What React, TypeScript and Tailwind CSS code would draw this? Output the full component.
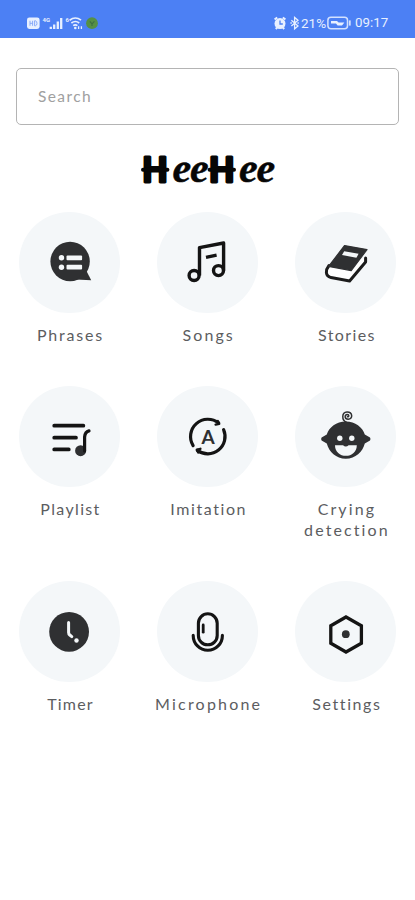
import type { ReactNode } from 'react'

const INK = '#2f3032'
const PAPER = '#f4f7f9'

const PhrasesIcon = () => (
  <>
    <circle cx="51.1" cy="49.5" r="19.7" fill={INK} />
    <path d="M57 67.4 L72.2 68.2 L67 58 Z" fill={INK} />
    <circle cx="42.5" cy="45.8" r="2.7" fill={PAPER} />
    <circle cx="42.5" cy="55.2" r="2.7" fill={PAPER} />
    <rect x="47.5" y="43.6" width="15.6" height="4.6" rx="1" fill={PAPER} />
    <rect x="47.5" y="52.8" width="15.6" height="4.6" rx="1" fill={PAPER} />
  </>
)

const SongsIcon = () => (
  <g fill="none" stroke="#141414" strokeWidth="3.4" strokeLinejoin="round">
    <circle cx="37.1" cy="63.5" r="5" />
    <circle cx="61.5" cy="58.6" r="5" />
    <path d="M42.5 63.5 V35.6 L66.6 31 V58.6" />
    <path d="M49 45.3 L59.6 43.1" />
  </g>
)

const StoriesIcon = () => (
  <>
    <path d="M34 53.5 C30.4 58 30 64 36 65.6 L54.6 69 L70.6 50 V46" fill="#fff" stroke="#1c1c1c" strokeWidth="3" strokeLinejoin="round" strokeLinecap="round" />
    <path d="M49.5 33.6 L72 37.6 L56.2 58.6 L33.6 54.4 Z" fill={INK} stroke={INK} strokeWidth="1.2" strokeLinejoin="round" />
    <path d="M49.2 39.2 L63.6 41.8 L61.4 45.8 L47 43 Z" fill={PAPER} />
  </>
)

const PlaylistIcon = () => (
  <>
    <path d="M35.2 39.7 H64.4 M35.2 51.7 H57 M35.2 63.4 H49.8" stroke="#141414" strokeWidth="3.7" strokeLinecap="round" />
    <circle cx="61.6" cy="64.7" r="5.5" fill={INK} />
    <path d="M65.6 65 V51 Q66 46 70 44.9" fill="none" stroke="#141414" strokeWidth="3.2" strokeLinecap="round" />
  </>
)

const ImitationIcon = () => (
  <>
    <g fill="none" stroke="#141414" strokeWidth="3.2" strokeLinecap="round" strokeLinejoin="round">
      <path d="M36.1 59.6 A17.3 17.3 0 0 1 61.6 37" />
      <path d="M66.6 43.6 A17.3 17.3 0 0 1 40.4 64.4" />
      <path d="M58.6 38.6 L62.2 37.8 L60.8 35" strokeWidth="2.4" />
      <path d="M43.4 62.8 L39.8 63.6 L41.2 66.4" strokeWidth="2.4" />
    </g>
    <text x="51" y="57.8" textAnchor="middle" fontFamily="Lato, sans-serif" fontWeight="700" fontSize="19" fill={INK}>A</text>
  </>
)

const BabyIcon = () => (
  <>
    <path d="M50.8 35.4 C60.4 35.4 67.4 41 69.8 48.4 L75 51.4 Q76 53 75 54.6 L69.8 57.6 C67.6 66 60.6 72.8 50.8 72.8 C41 72.8 34 66 31.8 57.6 L26.6 54.6 Q25.6 53 26.6 51.4 L31.8 48.4 C34.2 41 41.2 35.4 50.8 35.4 Z" fill={INK} />
    <circle cx="44.8" cy="52.3" r="2.7" fill={PAPER} />
    <circle cx="56.8" cy="52.3" r="2.7" fill={PAPER} />
    <path d="M40 59.2 H48 Q50.8 61.6 53.6 59.2 H61.8 C61.8 66 56.8 69.8 50.9 69.8 C45 69.8 40 66 40 59.2 Z" fill={PAPER} />
    <path d="M51.3 36.2 C46.6 34 46.4 26.4 52 26 C57.6 25.8 58.4 33 53.2 33.2 C49.2 33.2 49.4 28.6 52.2 28.6 C54.4 28.8 54.2 31 52.4 30.8" fill="none" stroke={INK} strokeWidth="1.5" strokeLinecap="round" />
  </>
)

const TimerIcon = () => (
  <>
    <circle cx="50.1" cy="50.8" r="19.9" fill={INK} />
    <path d="M49.6 41.4 V51.4 Q49.6 53 50.8 54 L52.8 55.6" fill="none" stroke={PAPER} strokeWidth="3" strokeLinecap="round" />
    <circle cx="57.5" cy="59.5" r="2.2" fill={PAPER} />
  </>
)

const MicrophoneIcon = () => (
  <g fill="none" stroke="#141414" strokeWidth="3.1" strokeLinecap="round">
    <rect x="41.4" y="32.8" width="18.8" height="31" rx="9.4" />
    <path d="M46.2 44 V51.2" strokeWidth="2.8" />
    <path d="M36.2 54.4 A14.6 14.9 0 0 0 65.4 54.4" />
  </g>
)

const SettingsIcon = () => (
  <>
    <path d="M51 36 L66.4 44.8 V62.2 L51 71 L35.8 62.2 V44.8 Z" fill="none" stroke="#141414" strokeWidth="3.3" />
    <circle cx="50.8" cy="53.2" r="3.9" fill={INK} />
  </>
)

type MenuItem = { label: string; icon: ReactNode; spacing: string }

const rows: { className: string; items: MenuItem[] }[] = [
  {
    className: 'h-[174px]',
    items: [
      { label: 'Phrases', icon: <PhrasesIcon />, spacing: 'tracking-[1.8px]' },
      { label: 'Songs', icon: <SongsIcon />, spacing: 'tracking-[2.1px]' },
      { label: 'Stories', icon: <StoriesIcon />, spacing: 'tracking-[1.4px]' },
    ],
  },
  {
    className: 'h-[195px]',
    items: [
      { label: 'Playlist', icon: <PlaylistIcon />, spacing: 'tracking-[1.35px]' },
      { label: 'Imitation', icon: <ImitationIcon />, spacing: 'tracking-[1.6px]' },
      { label: 'Crying detection', icon: <BabyIcon />, spacing: 'tracking-[2.1px]' },
    ],
  },
  {
    className: 'h-[195px]',
    items: [
      { label: 'Timer', icon: <TimerIcon />, spacing: 'tracking-[1.2px]' },
      { label: 'Microphone', icon: <MicrophoneIcon />, spacing: 'tracking-[2.2px]' },
      { label: 'Settings', icon: <SettingsIcon />, spacing: 'tracking-[1.6px]' },
    ],
  },
]

function MenuButton({ item }: { item: MenuItem }) {
  return (
    <button className="flex flex-col items-center">
      <span className="block size-[101px] shrink-0 rounded-full bg-[#f4f7f9]">
        <svg viewBox="0 0 101 101" className="size-[101px]">{item.icon}</svg>
      </span>
      <span className={`mt-3 block w-[116px] pl-0.5 text-center text-[16px] leading-[20.5px] text-[#5c5d5f] ${item.spacing}`}>
        {item.label}
      </span>
    </button>
  )
}

function StatusBar() {
  return (
    <header className="flex h-[38px] items-end justify-between bg-[#4c80f4] pr-[27px] pb-[7px] pl-[27px] text-[#e8f0ff]">
      <svg viewBox="0 0 72 16" className="h-4 w-[72px]" fill="none">
        <rect x="0" y="2.4" width="12.6" height="11.6" rx="2.4" fill="#e8f0ff" />
        <path d="M3 5.8 V10.8 M3 8.3 H5.6 M5.6 5.8 V10.8 M7.6 5.8 V10.8 H8.4 Q10 10.4 10 8.3 Q10 6.2 8.4 5.8 Z" stroke="#7da2f7" strokeWidth="0.9" />
        <text x="15.6" y="6.8" fontSize="6" fontWeight="700" fontFamily="Roboto, sans-serif" fill="#e8f0ff">4G</text>
        <path d="M23.8 14 V11.8 M27.2 14 V9.6 M30.8 14 V6.6 M34.2 14 V3" stroke="#e8f0ff" strokeWidth="2.3" />
        <text x="38.6" y="6.8" fontSize="6" fontWeight="700" fontFamily="Roboto, sans-serif" fill="#e8f0ff">6</text>
        <path d="M42.6 5.2 Q48.4 0.8 54 5.2 M44.4 8 Q48.4 5 52.2 8 M46.2 10.6 Q48.3 9 50.4 10.6" stroke="#e8f0ff" strokeWidth="1.7" />
        <circle cx="48.3" cy="13" r="1.3" fill="#e8f0ff" />
        <path d="M51.6 11.2 V14 M54.4 11.2 V14" stroke="#e8f0ff" strokeWidth="1.3" />
        <circle cx="65" cy="8.2" r="5.9" fill="#569044" />
        <path d="M62.8 6.4 L65 8.8 L67.4 6.4 M65 8.8 V11" stroke="#3d7040" strokeWidth="1.2" />
      </svg>
      <div className="flex h-4 items-center font-[Roboto,sans-serif] leading-4">
        <svg viewBox="0 0 28 16" className="h-4 w-7" fill="none">
          <circle cx="7" cy="8.6" r="5.5" fill="#e8f0ff" />
          <path d="M1.6 4.6 L4.2 2.4 M12.4 4.6 L9.8 2.4 M2.8 14 L4 12.6 M11.2 14 L10 12.6" stroke="#e8f0ff" strokeWidth="2" />
          <path d="M7 5.4 V9 H9.8" stroke="#4c80f4" strokeWidth="1.3" />
          <path d="M18.4 5.2 L25 11 L21.6 13.8 V2.4 L25 5.2 L18.4 11" stroke="#e8f0ff" strokeWidth="1.3" />
          <path d="M17.4 8.1 H18.8 M24.4 8.1 H25.8" stroke="#e8f0ff" strokeWidth="1.5" />
        </svg>
        <span className="w-[26px] text-[13.5px]">21%</span>
        <svg viewBox="0 0 25 14" className="mr-[3px] h-3.5 w-[25px]" fill="none">
          <rect x="0.9" y="1.2" width="19.6" height="11.6" rx="3" stroke="#d3e1ff" strokeWidth="1.5" />
          <path d="M22.8 4.4 V9.6" stroke="#d3e1ff" strokeWidth="1.8" />
          <path d="M4 5 H10 L11.6 6.6 H17.4 L15 9.4 H10.6 L9 7.6 H4 Z" fill="#e8f0ff" />
        </svg>
        <span className="w-[33px] text-[13.3px] whitespace-nowrap">09:17</span>
      </div>
    </header>
  )
}

function Logo() {
  const script = { fontFamily: '"Liberation Serif", serif', fontWeight: 700, fontStyle: 'italic', fontSize: 42, strokeWidth: 0.5 }
  const block = { fontFamily: 'Lato, sans-serif', fontWeight: 900, fontSize: 34, strokeWidth: 3, textLength: 25, lengthAdjust: 'spacingAndGlyphs' }
  return (
    <svg viewBox="-10 -15 155 64" className="h-16 w-[155px]">
      <g fill="#060606" stroke="#060606" strokeLinejoin="round" strokeLinecap="round">
        <text x="2.6" y="28" {...block}>H</text>
        <path d="M3 15.8 H27.4" strokeWidth="4" />
        <text x="32.6" y="28.4" {...script}>e</text>
        <text x="50" y="28.4" {...script}>e</text>
        <text x="69.2" y="28" {...block}>H</text>
        <path d="M69.6 15.8 H94" strokeWidth="4" />
        <text x="99" y="28.4" {...script}>e</text>
        <text x="116.4" y="28.4" {...script}>e</text>
      </g>
    </svg>
  )
}

export default function App() {
  return (
    <div className="h-[900px] w-[415px] overflow-hidden bg-white font-[Lato,sans-serif]">
      <StatusBar />
      <div className="mx-4 mt-[29.5px] h-[57px]">
        <input
          placeholder="Search"
          className="h-full w-full rounded-[5px] border-[1.5px] border-[#b4b4b4] px-[21px] text-[15.5px] tracking-[1.4px] outline-none placeholder:text-[#a0a0a0]"
        />
      </div>
      <div className="mt-[14px] flex h-16 pl-[130px]">
        <Logo />
      </div>
      <main className="mt-[9.5px] w-[415px] pl-[0.4px]">
        {rows.map((row, i) => (
          <div key={i} className={`grid grid-cols-3 items-start ${row.className}`}>
            {row.items.map(item => <MenuButton key={item.label} item={item} />)}
          </div>
        ))}
      </main>
    </div>
  )
}
